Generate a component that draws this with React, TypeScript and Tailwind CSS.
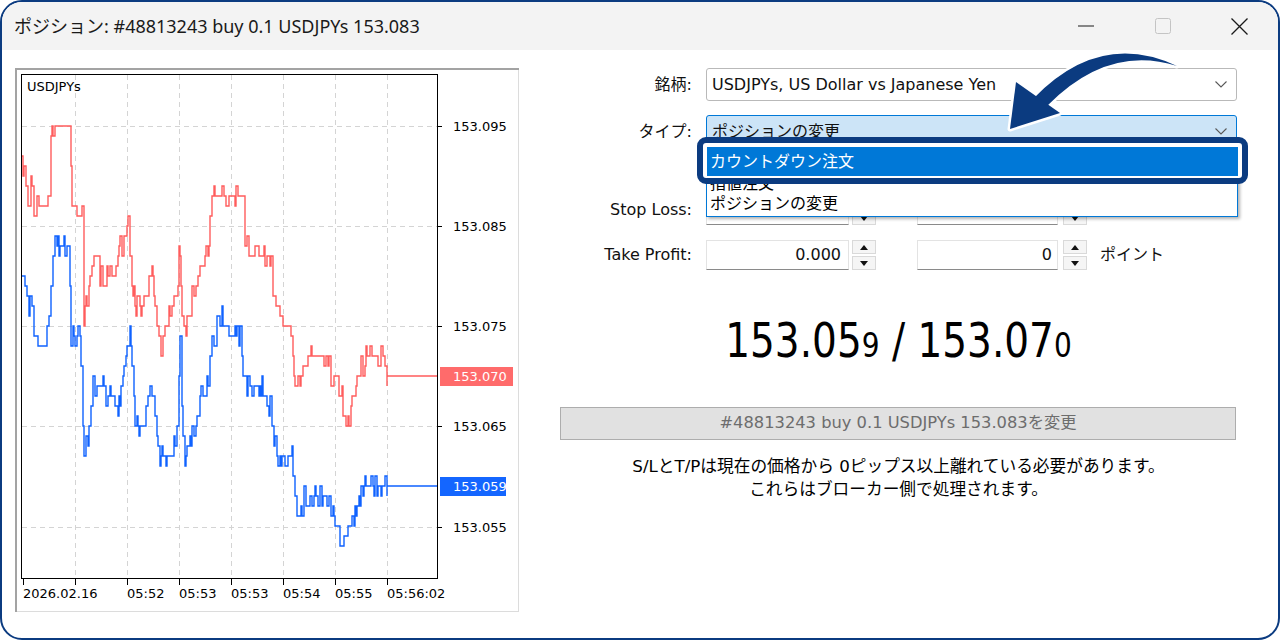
import React from 'react';

type Pt = [number, number];

// chart keypoints in page coordinates (x, y); 10px = 1 point (0.001)
const askKeys: Pt[] = [
  [22, 156], [24, 166], [26, 186], [28, 206], [30, 196], [31, 176], [33, 206], [35, 216], [37, 206], [42, 206],
  [49, 206], [50, 186], [51, 136], [52, 126], [53, 146], [54, 136], [56, 126], [70, 126], [71, 166], [72, 206],
  [80, 206], [82, 216], [83, 326], [85, 316], [88, 296], [92, 276], [95, 256], [98, 266], [100, 276], [115, 276],
  [117, 256], [120, 246], [124, 236], [128, 226], [130, 246], [132, 286], [134, 296], [138, 306], [145, 306],
  [147, 296], [149, 266], [151, 256], [153, 276], [155, 306], [157, 326], [160, 346], [163, 336], [166, 316],
  [170, 306], [175, 296], [178, 276], [179, 236], [181, 276], [183, 346], [185, 326], [188, 316], [193, 296],
  [197, 286], [200, 266], [204, 256], [208, 256], [210, 226], [212, 206], [214, 196], [244, 196], [245, 246],
  [250, 256], [256, 246], [262, 256], [268, 256], [271, 266], [274, 296], [278, 306], [282, 316], [286, 326],
  [290, 326], [292, 346], [294, 376], [296, 386], [300, 376], [305, 366], [310, 356], [328, 356], [331, 376],
  [335, 386], [340, 386], [343, 406], [346, 426], [349, 416], [352, 406], [355, 396], [358, 376], [362, 366],
  [366, 356], [372, 356], [378, 366], [383, 356], [386, 376], [437, 376],
];

const bidKeys: Pt[] = [
  [22, 276], [25, 286], [27, 306], [29, 316], [31, 296], [33, 316], [35, 336], [38, 346], [46, 346], [48, 326],
  [50, 296], [51, 276], [52, 246], [69, 246], [70, 296], [71, 346], [73, 336], [80, 336], [82, 396], [84, 456],
  [86, 446], [89, 436], [91, 406], [93, 386], [115, 396], [118, 406], [121, 386], [124, 366], [127, 346],
  [130, 336], [131, 356], [133, 386], [135, 416], [140, 426], [143, 436], [146, 416], [149, 386], [153, 396],
  [155, 416], [158, 446], [160, 456], [170, 456], [173, 436], [178, 426], [180, 336], [182, 406], [184, 476],
  [186, 446], [190, 446], [195, 426], [198, 416], [201, 396], [205, 386], [208, 376], [211, 356], [214, 336],
  [218, 326], [222, 316], [225, 336], [235, 336], [238, 326], [241, 346], [245, 376], [248, 386], [262, 386],
  [266, 396], [270, 406], [273, 436], [277, 456], [290, 456], [292, 446], [294, 476], [296, 516], [298, 526],
  [301, 506], [305, 496], [330, 496], [333, 516], [337, 526], [340, 536], [342, 546], [345, 536], [349, 526],
  [352, 516], [356, 506], [359, 496], [362, 486], [386, 486], [437, 486],
];

function makeRng(seed: number) {
  let s = seed;
  return () => {
    s = (s * 1664525 + 1013904223) % 4294967296;
    return s / 4294967296;
  };
}

function interp(keys: Pt[], x: number) {
  for (let i = 1; i < keys.length; i++) {
    if (x <= keys[i][0]) {
      const [x0, y0] = keys[i - 1];
      const [x1, y1] = keys[i];
      return y0 + ((y1 - y0) * (x - x0)) / (x1 - x0);
    }
  }
  return keys[keys.length - 1][1];
}

function tickPath(keys: Pt[], seed: number, flatX: number) {
  const rnd = makeRng(seed);
  let x = keys[0][0];
  let d = `M${x} ${keys[0][1]}`;
  while (x < flatX) {
    x += 1 + Math.floor(rnd() * 2);
    let y = Math.round((interp(keys, x) - 6) / 10) * 10 + 6;
    const j = rnd();
    if (j < 0.18) y -= 10;
    else if (j > 0.82) y += 10;
    y = Math.max(126, Math.min(546, y));
    d += `H${x}V${y}`;
  }
  const last = keys[keys.length - 1];
  d += `V${last[1]}H${last[0]}`;
  return d;
}

const askPath = tickPath(askKeys, 17, 386);
const bidPath = tickPath(bidKeys, 91, 387);

const priceLevels = [
  { y: 126, label: '153.095' },
  { y: 226, label: '153.085' },
  { y: 326, label: '153.075' },
  { y: 426, label: '153.065' },
  { y: 527, label: '153.055' },
];
const timeTicks = [
  { x: 23, label: '2026.02.16' },
  { x: 75, label: '' },
  { x: 127, label: '05:52' },
  { x: 179, label: '05:53' },
  { x: 231, label: '05:53' },
  { x: 283, label: '05:54' },
  { x: 335, label: '05:55' },
  { x: 387, label: '05:56:02' },
];

function Chart() {
  return (
    <div className="h-[544px] w-[504px] shrink-0 bg-white shadow-[inset_2px_2px_0_#a3a3a3,inset_-1px_-1px_0_#dcdcdc]">
      <svg width={504} height={544} viewBox="15 68 504 544" className="block" fontFamily="DejaVu Sans, sans-serif">
        {priceLevels.map((p) => (
          <line key={p.y} x1={22} x2={437} y1={p.y + 0.5} y2={p.y + 0.5} stroke="#d4d4d4" strokeDasharray="5 4" />
        ))}
        {timeTicks.slice(1).map((t) => (
          <line key={t.x} x1={t.x + 0.5} x2={t.x + 0.5} y1={75} y2={578} stroke="#d4d4d4" strokeDasharray="5 4" />
        ))}
        <path d={askPath} fill="none" stroke="#ff5c5c" strokeWidth={1.4} />
        <path d={bidPath} fill="none" stroke="#0f62ff" strokeWidth={1.4} />
        <rect x={21.5} y={74.5} width={416} height={504} fill="none" stroke="#000" />
        {priceLevels.map((p) => (
          <g key={p.label}>
            <line x1={437} x2={442} y1={p.y + 0.5} y2={p.y + 0.5} stroke="#000" />
            <text x={453} y={p.y + 5} fontSize={13} fill="#000">{p.label}</text>
          </g>
        ))}
        {timeTicks.map((t) => (
          <g key={'t' + t.x}>
            <line x1={t.x + 0.5} x2={t.x + 0.5} y1={578} y2={585} stroke="#000" />
            {t.label && <text x={t.x} y={598} fontSize={13} fill="#000">{t.label}</text>}
          </g>
        ))}
        <text x={27} y={91} fontSize={13} fill="#000">USDJPYs</text>
        <rect x={440} y={367} width={73} height={19} fill="#ff6b6b" />
        <text x={453} y={381} fontSize={13} fill="#fff">153.070</text>
        <rect x={440} y={477} width={66} height={19} fill="#1466ff" />
        <text x={453} y={491} fontSize={13} fill="#fff">153.059</text>
      </svg>
    </div>
  );
}

function Chevron() {
  return (
    <svg width="12" height="7" viewBox="0 0 12 7">
      <path d="M0.5 0.5 L6 6 L11.5 0.5" fill="none" stroke="#5a5a5a" strokeWidth="1.1" />
    </svg>
  );
}

function Spinner() {
  return (
    <div className="flex h-[30px] w-[24px] shrink-0 flex-col gap-[2px]">
      <div className="flex flex-1 items-center justify-center border border-[#d9d9d9] bg-[#f5f5f5]">
        <svg width="8" height="5" viewBox="0 0 8 5">
          <path d="M0 5 L4 0 L8 5Z" fill="#111" />
        </svg>
      </div>
      <div className="flex flex-1 items-center justify-center border border-[#d9d9d9] bg-[#f5f5f5]">
        <svg width="8" height="5" viewBox="0 0 8 5">
          <path d="M0 0 L4 5 L8 0Z" fill="#111" />
        </svg>
      </div>
    </div>
  );
}

function NumberRow({ label, value }: { label: string; value: string }) {
  return (
    <div className="flex h-[30px] items-center">
      <div className="w-[132px] shrink-0 text-right">{label}</div>
      <div className="ml-[14px] flex h-[30px] w-[143px] items-center justify-end border border-[#e3e3e3] border-b-[#8a8a8a] bg-white pr-[7px]">
        {value}
      </div>
      <div className="ml-[3px]">
        <Spinner />
      </div>
      <div className="ml-[41px] flex h-[30px] w-[141px] items-center justify-end border border-[#e3e3e3] border-b-[#8a8a8a] bg-white pr-[5px]">
        0
      </div>
      <div className="ml-[5px]">
        <Spinner />
      </div>
      <div className="ml-[13px]">ポイント</div>
    </div>
  );
}

function Form() {
  return (
    <div className="ml-[41px] flex w-[677px] flex-col text-[16px] text-[#111]">
      <div className="flex h-[33px] items-center">
        <div className="w-[132px] shrink-0 text-right">銘柄:</div>
        <div className="ml-[14px] flex h-[33px] w-[531px] items-center justify-between rounded-[3px] border border-[#b9b9b9] bg-white pl-[5px] pr-[9px]">
          <span>USDJPYs, US Dollar vs Japanese Yen</span>
          <Chevron />
        </div>
      </div>
      <div className="mt-[14px] flex h-[33px] items-center">
        <div className="w-[132px] shrink-0 text-right">タイプ:</div>
        <div className="ml-[14px] flex h-[33px] w-[531px] items-center justify-between rounded-[3px] border border-[#0078d7] bg-[#cce4f7] pl-[5px] pr-[9px]">
          <span>ポジションの変更</span>
          <Chevron />
        </div>
      </div>
      <div className="mt-[47px]">
        <NumberRow label="Stop Loss:" value="0.000" />
      </div>
      <div className="mt-[15px]">
        <NumberRow label="Take Profit:" value="0.000" />
      </div>
      <div className="mt-[40px] flex h-[60px] items-center justify-center text-black">
        <div className="scale-y-[1.22] whitespace-pre leading-none">
          <span className="text-[39px]">153.05</span>
          <span className="text-[28px]">9</span>
          <span className="text-[39px]"> / 153.07</span>
          <span className="text-[28px]">0</span>
        </div>
      </div>
      <div className="mt-[37px] flex h-[33px] w-[676px] items-center justify-center border border-[#adadad] bg-[#e1e1e1] text-[16.3px] text-[#6d6d6d]">
        #48813243 buy 0.1 USDJPYs 153.083を変更
      </div>
      <div className="mt-[15px] text-center text-[16.7px] leading-[23px] text-black">
        <div>S/LとT/Pは現在の価格から 0ピップス以上離れている必要があります。</div>
        <div>これらはブローカー側で処理されます。</div>
      </div>
    </div>
  );
}

function TitleBar() {
  return (
    <div className="flex h-[48px] shrink-0 items-center justify-between bg-[#f3f3f3]">
      <div className="pl-[12px] font-['Noto_Sans','Noto_Sans_CJK_JP',sans-serif] text-[18px] text-[#1a1a1a]">
        ポジション: #48813243 buy 0.1 USDJPYs 153.083
      </div>
      <div className="flex h-full">
        <div className="flex w-[77px] items-center justify-center">
          <svg width="16" height="2" viewBox="0 0 16 2">
            <line x1="0" x2="16" y1="1" y2="1" stroke="#1a1a1a" strokeWidth="1.2" />
          </svg>
        </div>
        <div className="flex w-[77px] items-center justify-center">
          <svg width="16" height="16" viewBox="0 0 16 16">
            <rect x="0.5" y="0.5" width="15" height="15" rx="2" fill="none" stroke="#c4c4c4" />
          </svg>
        </div>
        <div className="flex w-[77px] items-center justify-center">
          <svg width="17" height="17" viewBox="0 0 17 17">
            <path d="M0.5 0.5 L16.5 16.5 M16.5 0.5 L0.5 16.5" stroke="#1a1a1a" strokeWidth="1.3" />
          </svg>
        </div>
      </div>
    </div>
  );
}

export default function App() {
  return (
    <div className="relative h-[640px] w-[1280px] overflow-hidden bg-white font-['DejaVu_Sans','Noto_Sans_CJK_JP',sans-serif]">
      <div className="flex h-full flex-col overflow-hidden rounded-[22px] border-2 border-[#0b3b80] bg-white">
        <TitleBar />
        <div className="flex pl-[13px] pt-[18px]">
          <Chart />
          <Form />
        </div>
      </div>

      {/* open dropdown list */}
      <div className="absolute left-[706px] top-[139px] h-[78px] w-[532px] border border-[#0078d7] bg-white pl-[3px] pt-[34px] text-[16px] leading-[20px] text-black shadow-[2px_2px_3px_rgba(0,0,0,0.3)]">
        <div>指値注文</div>
        <div>ポジションの変更</div>
      </div>

      {/* highlight annotation */}
      <div className="absolute left-[697px] top-[137px] h-[47px] w-[551px] rounded-[9px] border-[6px] border-[#0b3b80] bg-white pb-[2px] pl-[4px] pr-[4px] pt-[4px]">
        <div className="flex h-full items-center bg-[#0078d7] pl-[3px] text-[16px] text-white">カウントダウン注文</div>
      </div>

      {/* curved arrow */}
      <svg className="pointer-events-none absolute left-0 top-0" width={1280} height={640}>
        <g fill="#0b3b80" stroke="#fff" strokeWidth={5} strokeLinejoin="round">
          <path d="M1177 66 Q1100 30 1034 98 L1047 106 Q1108 44 1177 66 Z" />
          <polygon points="1016,82 1060,113 1010,129" />
        </g>
        <g fill="#0b3b80">
          <path d="M1177 66 Q1100 30 1034 98 L1047 106 Q1108 44 1177 66 Z" />
          <polygon points="1016,82 1060,113 1010,129" />
        </g>
      </svg>
    </div>
  );
}
